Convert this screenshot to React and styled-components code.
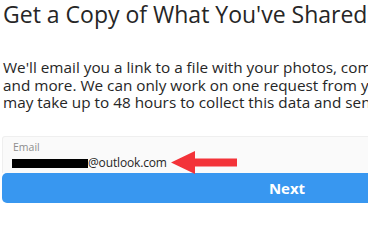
import React from 'react';
import styled, { createGlobalStyle } from 'styled-components';

const GlobalStyle = createGlobalStyle`
	html, body {
		margin: 0;
		padding: 0;
		background: #ffffff;
		overflow: hidden;
	}
	body {
		font-family: "Open Sans", "Noto Sans", Arial, sans-serif;
	}
`

const Page = styled.div`
	width: 570px;
	padding: 0 0 0 2px;
`

const Title = styled.h1`
	margin: 0;
	padding: 1px 0 0 1px;
	font-size: 23px;
	line-height: 27px;
	font-weight: 400;
	color: #262626;
	white-space: nowrap;
`

const Text = styled.p`
	margin: 31px 0 0 1px;
	font-size: 15.3px;
	line-height: 17.5px;
	color: #262626;
`

const Line = styled.span`
	display: block;
	white-space: nowrap;
`

const Field = styled.div`
	margin-top: 24px;
	height: 37px;
	box-sizing: border-box;
	padding: 4px 0 0 9px;
	background: #fafafa;
	border: 1px solid #efefef;
	border-bottom: none;
	border-radius: 3px 3px 0 0;
`

const Label = styled.div`
	font-size: 10.5px;
	line-height: 13px;
	color: #8e8e8e;
	padding-left: 1px;
`

const Value = styled.div`
	display: flex;
	align-items: center;
	gap: 4px;
	height: 17px;
	font-size: 12px;
	letter-spacing: -0.15px;
	color: #262626;
`

const Redacted = styled.span`
	display: inline-block;
	width: 76px;
	height: 9px;
	margin-top: 2px;
	background: #000;
	margin-right: -4px;
`

const Arrow = styled.svg`
	display: block;
	flex: none;
`

const Button = styled.button`
	display: block;
	width: 570px;
	height: 30px;
	border: none;
	border-radius: 5px;
	background: #3897f0;
	color: #ffffff;
	font-family: inherit;
	font-size: 15px;
	font-weight: 700;
	cursor: pointer;
`

export default function App() {
	return (
		<Page>
			<GlobalStyle />
			<Title>Get a Copy of What You've Shared on Instagram</Title>
			<Text>
				<Line>We'll email you a link to a file with your photos, comments, profile information</Line>
				<Line>and more. We can only work on one request from your account at a time, and it</Line>
				<Line>may take up to 48 hours to collect this data and send it to you.</Line>
			</Text>
			<Field>
				<Label>Email</Label>
				<Value>
					<Redacted />
					<span>@outlook.com</span>
					<Arrow width="66" height="23" viewBox="0 0 66 23">
						<polygon points="0,11.5 24,0 24,7.5 66,7.5 66,15.5 24,15.5 24,23" fill="#f33339" />
					</Arrow>
				</Value>
			</Field>
			<Button>Next</Button>
		</Page>
	);
}
